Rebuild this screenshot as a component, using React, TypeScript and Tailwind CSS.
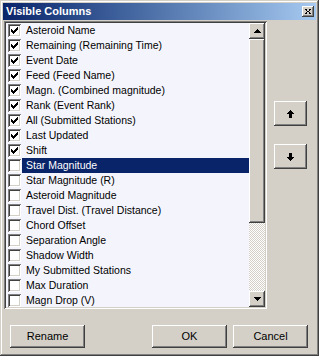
import React from "react";

const items: { label: string; checked: boolean }[] = [
  { label: "Asteroid Name", checked: true },
  { label: "Remaining (Remaining Time)", checked: true },
  { label: "Event Date", checked: true },
  { label: "Feed (Feed Name)", checked: true },
  { label: "Magn. (Combined magnitude)", checked: true },
  { label: "Rank (Event Rank)", checked: true },
  { label: "All (Submitted Stations)", checked: true },
  { label: "Last Updated", checked: true },
  { label: "Shift", checked: true },
  { label: "Star Magnitude", checked: false },
  { label: "Star Magnitude (R)", checked: false },
  { label: "Asteroid Magnitude", checked: false },
  { label: "Travel Dist. (Travel Distance)", checked: false },
  { label: "Chord Offset", checked: false },
  { label: "Separation Angle", checked: false },
  { label: "Shadow Width", checked: false },
  { label: "My Submitted Stations", checked: false },
  { label: "Max Duration", checked: false },
  { label: "Magn Drop (V)", checked: false },
];

const raised =
  "bg-[#d4d0c8] shadow-[inset_-1px_-1px_#404040,inset_1px_1px_#ffffff,inset_-2px_-2px_#808080,inset_2px_2px_#d4d0c8]";

function CheckBox({ checked }: { checked: boolean }) {
  return (
    <div className="w-[13px] h-[13px] bg-white shadow-[inset_1px_1px_#808080,inset_-1px_-1px_#ffffff,inset_2px_2px_#404040,inset_-2px_-2px_#d4d0c8] flex items-center justify-center shrink-0">
      {checked && (
        <svg width="7" height="7" viewBox="0 0 7 7" shapeRendering="crispEdges">
          <path
            d="M0 2h1v3h-1zM1 3h1v3h-1zM2 4h1v3h-1zM3 3h1v3h-1zM4 2h1v3h-1zM5 1h1v3h-1zM6 0h1v3h-1z"
            fill="#000"
          />
        </svg>
      )}
    </div>
  );
}

function Tri({ up }: { up: boolean }) {
  return (
    <svg width="7" height="4" viewBox="0 0 7 4" shapeRendering="crispEdges">
      {up ? (
        <path d="M3 0h1v1h-1zM2 1h3v1h-3zM1 2h5v1h-5zM0 3h7v1h-7z" fill="#000" />
      ) : (
        <path d="M0 0h7v1h-7zM1 1h5v1h-5zM2 2h3v1h-3zM3 3h1v1h-1z" fill="#000" />
      )}
    </svg>
  );
}

function Arrow({ up }: { up: boolean }) {
  return (
    <svg width="7" height="8" viewBox="0 0 7 8" shapeRendering="crispEdges">
      {up ? (
        <path d="M3 0h1v1h-1zM2 1h3v1h-3zM1 2h5v1h-5zM0 3h7v1h-7zM2 4h3v4h-3z" fill="#000" />
      ) : (
        <path d="M2 0h3v4h-3zM0 4h7v1h-7zM1 5h5v1h-5zM2 6h3v1h-3zM3 7h1v1h-1z" fill="#000" />
      )}
    </svg>
  );
}

export default function App() {
  return (
    <div className="w-[319px] h-[356px] bg-[#d4d0c8] shadow-[inset_-1px_-1px_#404040,inset_1px_1px_#d4d0c8,inset_-2px_-2px_#808080,inset_2px_2px_#ffffff] p-[3px] flex flex-col font-['Liberation_Sans',Arial,sans-serif] text-black leading-none select-none">
      {/* Title bar */}
      <div className="h-[17px] bg-linear-to-r from-[#0a246a] to-[#a6caf0] flex items-center pl-[3px] pr-[2px] shrink-0">
        <span className="text-white font-bold text-[11px] flex-1">Visible Columns</span>
        <div className={`w-[12px] h-[11px] ${raised} flex items-center justify-center`}>
          <svg width="6" height="5" viewBox="0 0 6 5" shapeRendering="crispEdges">
            <path d="M0 0h2v1h-2zM4 0h2v1h-2zM1 1h1v1h-1zM4 1h1v1h-1zM2 2h2v1h-2zM1 3h1v1h-1zM4 3h1v1h-1zM0 4h2v1h-2zM4 4h2v1h-2z" fill="#000" />
          </svg>
        </div>
      </div>

      {/* Middle */}
      <div className="flex mt-[1px] pl-[1px]">
        <div className="w-[263px] h-[288px] bg-[#f4f5fc] shadow-[inset_1px_1px_#808080,inset_-1px_-1px_#ffffff,inset_2px_2px_#404040,inset_-2px_-2px_#d4d0c8] p-[2px] flex">
          <div className="flex-1 overflow-hidden flex flex-col">
            {items.map((it, i) => {
              const sel = i === 9;
              return (
                <div key={i} className="h-[15px] flex items-center pl-[2px] shrink-0">
                  <CheckBox checked={it.checked} />
                  <div
                    className={`ml-[1px] flex-1 h-[15px] flex items-center pl-[4px] whitespace-nowrap text-[10.5px] ${
                      sel ? "bg-[#0a246a] text-white" : ""
                    }`}
                  >
                    {it.label}
                  </div>
                </div>
              );
            })}
          </div>
          {/* Scrollbar */}
          <div className="w-[16px] flex flex-col shrink-0">
            <div className={`h-[16px] ${raised} flex items-center justify-center shrink-0`}>
              <Tri up />
            </div>
            <div className={`h-[184px] ${raised} shrink-0`} />
            <div className="flex-1 bg-[repeating-conic-gradient(#ffffff_0_25%,#d4d0c8_0_50%)] bg-[length:2px_2px]" />
            <div className={`h-[16px] ${raised} flex items-center justify-center shrink-0`}>
              <Tri up={false} />
            </div>
          </div>
        </div>

        <div className="flex flex-col ml-[7px] pt-[80px] gap-[18px]">
          <div className={`w-[33px] h-[25px] ${raised} flex items-center justify-center`}>
            <Arrow up />
          </div>
          <div className={`w-[33px] h-[25px] ${raised} flex items-center justify-center`}>
            <Arrow up={false} />
          </div>
        </div>
      </div>

      {/* Bottom buttons */}
      <div className="flex mt-[16px] pl-[7px]">
        <div className={`w-[75px] h-[23px] ${raised} flex items-center justify-center text-[11px]`}>Rename</div>
        <div className={`w-[75px] h-[23px] ${raised} flex items-center justify-center text-[11px] ml-[67px]`}>OK</div>
        <div className={`w-[75px] h-[23px] ${raised} flex items-center justify-center text-[11px] ml-[6px]`}>Cancel</div>
      </div>
    </div>
  );
}
